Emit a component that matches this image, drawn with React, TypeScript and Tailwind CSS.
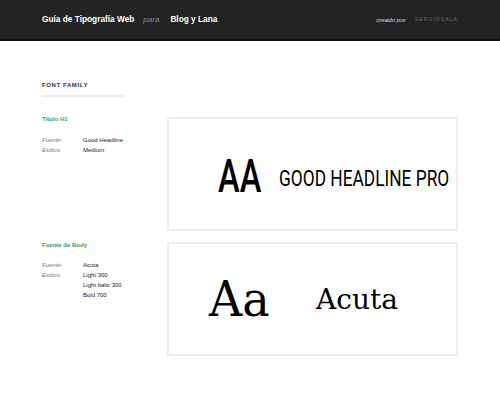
import React from "react";

const sans = "font-['Liberation_Sans',Arial,sans-serif]";

function Specs({ title, rows, rowGap }: { title: string; rows: [string, string][]; rowGap: string }) {
  return (
    <div className={`w-[83px] ${sans}`}>
      <div className="text-[6px] leading-[8px] font-bold text-[#3d9c5c]">{title}</div>
      <div className={rowGap}>
        {rows.map(([k, v], i) => (
          <div key={i} className="flex text-[6px] leading-[10px]">
            <span className="w-[41px] italic text-[#7a7a7a]">{k}</span>
            <span className="text-[#222]">{v}</span>
          </div>
        ))}
      </div>
    </div>
  );
}

export default function App() {
  return (
    <div className={`min-h-[396px] bg-white ${sans}`}>
      <header className="h-[41px] bg-[#232323] border-b-2 border-[#101010] flex items-center px-[42px]">
        <span className="text-[8.3px] font-bold text-white">Guía de Tipografía Web</span>
        <span className="ml-[9px] text-[8px] italic text-[#8c8c8c]">para</span>
        <span className="ml-[11px] text-[8.3px] font-bold text-white">Blog y Lana</span>
        <span className="ml-auto text-[6.2px] italic text-[#dcdcdc]">creado por</span>
        <span className="ml-[9px] text-[5px] tracking-[1.1px] text-[#6a6a6a]">SERGIOSALA</span>
      </header>

      <main className="px-[42px] pt-[40px]">
        <div className="text-[6px] leading-[8px] font-bold tracking-[0.6px] text-[#333]">FONT FAMILY</div>
        <div className="mt-[6px] w-[83px] h-[2px] bg-[#eeeeee]" />

        <div className="mt-[20px] flex gap-[42px]">
          <div className="-mt-[2px]">
            <Specs
              title="Título H1"
              rowGap="mt-[12px]"
              rows={[
                ["Fuente:", "Good Headline"],
                ["Estilos:", "Medium"],
              ]}
            />
          </div>
          <div className="w-[292px] h-[114px] border-2 border-[#eeeeee] flex items-start pl-[49px]">
            <div className="w-[44px] mt-[34px] font-['Roboto',sans-serif] font-medium text-[46px] leading-none text-black whitespace-nowrap">
              <span className="inline-block origin-left scale-x-[0.71]">AA</span>
            </div>
            <div className="ml-[17px] w-[169px] mt-[48px] font-['Roboto',sans-serif] font-normal text-[22.5px] leading-none text-black whitespace-nowrap">
              <span className="inline-block origin-left scale-x-[0.77]">GOOD HEADLINE PRO</span>
            </div>
          </div>
        </div>

        <div className="mt-[11px] flex gap-[42px]">
          <div className="-mt-[1px]">
            <Specs
              title="Fuente de Body"
              rowGap="mt-[11px]"
              rows={[
                ["Fuente:", "Acuta"],
                ["Estilos:", "Light 300"],
                ["", "Light Italic 300"],
                ["", "Bold 700"],
              ]}
            />
          </div>
          <div className="w-[292px] h-[114px] border-2 border-[#eeeeee] flex items-start pl-[40px]">
            <div className="w-[61px] mt-[31px] font-['DejaVu_Serif',serif] text-[48px] leading-none text-black whitespace-nowrap">
              <span className="inline-block origin-left scale-x-[0.96]">Aa</span>
            </div>
            <div className="ml-[46px] mt-[42px] font-['DejaVu_Serif',serif] text-[28px] leading-none text-black whitespace-nowrap">
              Acuta
            </div>
          </div>
        </div>
      </main>
    </div>
  );
}
